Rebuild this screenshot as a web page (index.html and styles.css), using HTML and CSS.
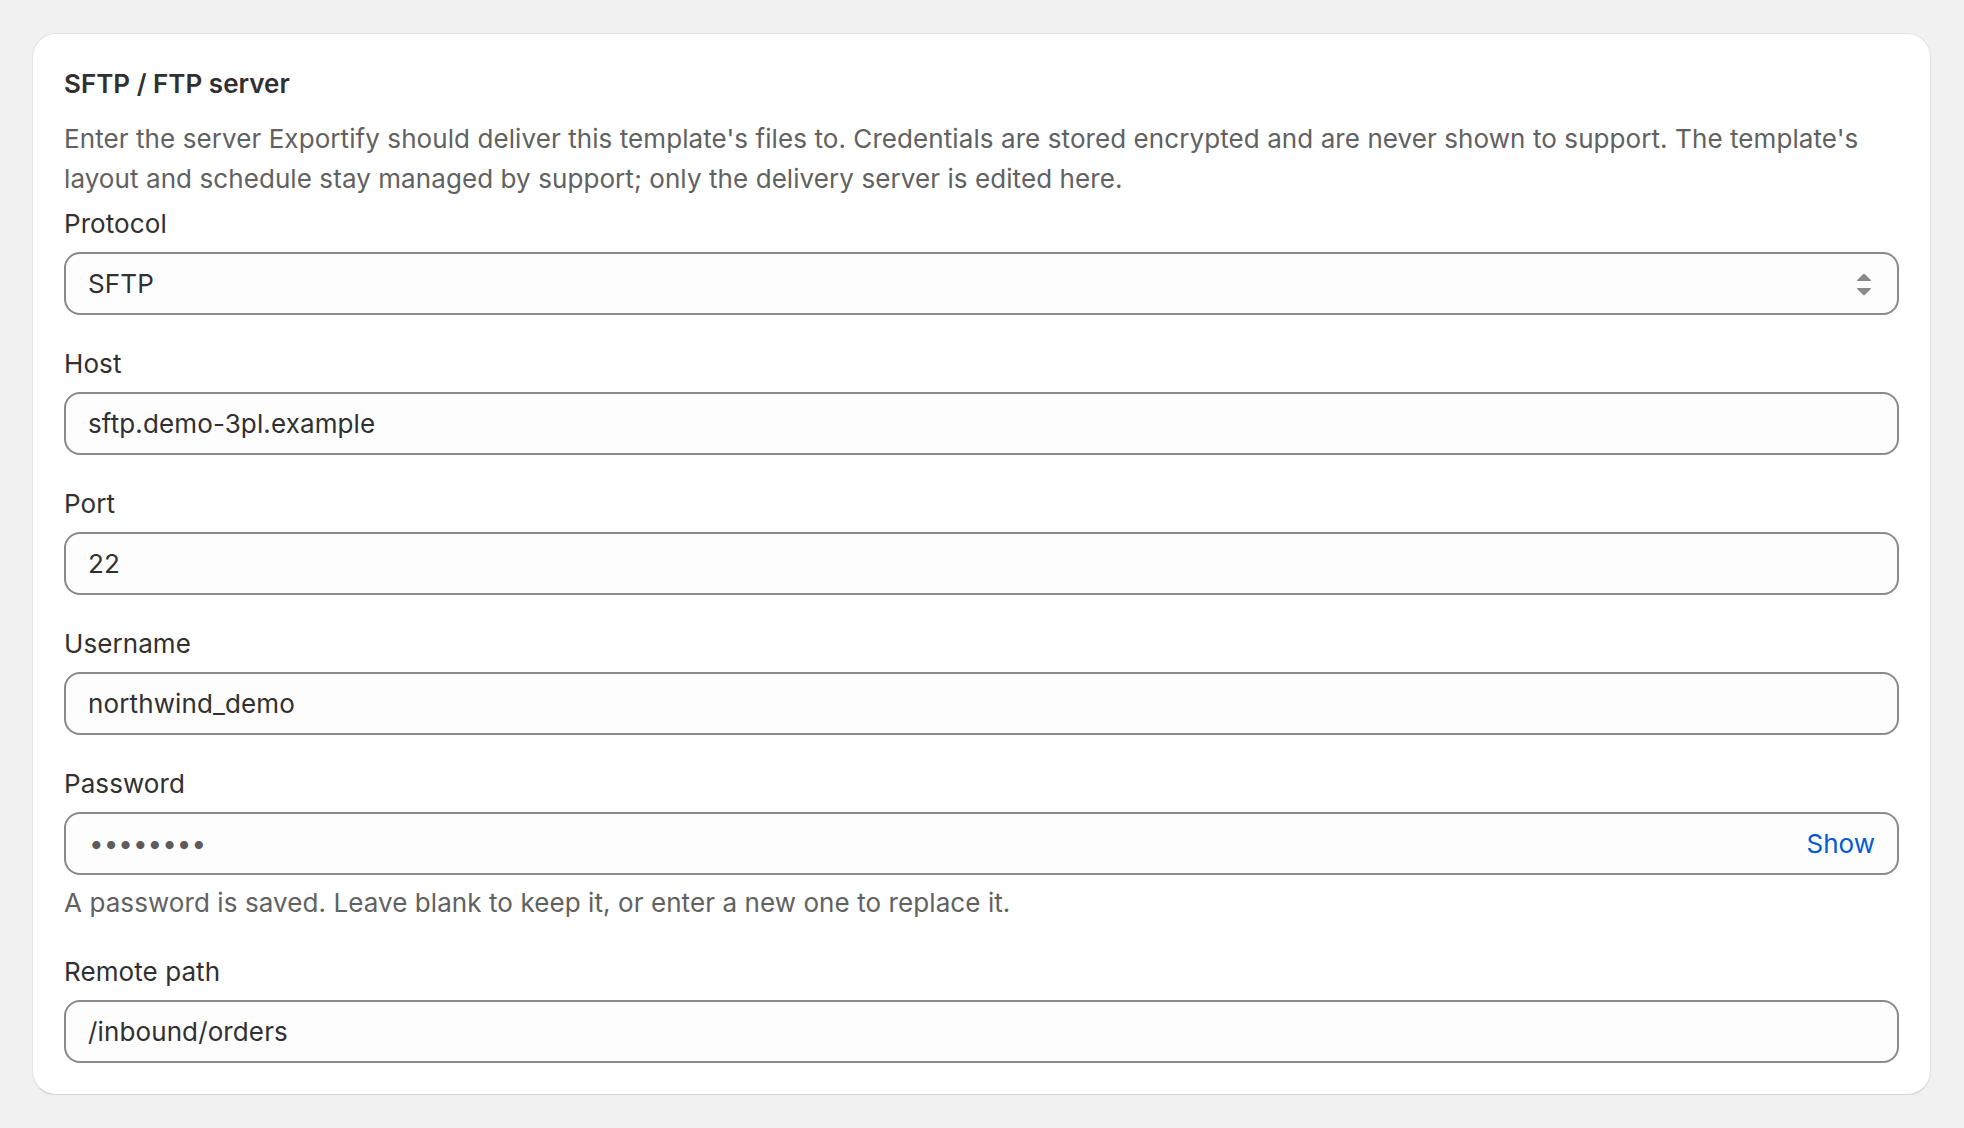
FILE: index.html
```html
<!DOCTYPE html>
<html lang="en">
<head>
<meta charset="utf-8">
<title>SFTP / FTP server</title>
<link rel="stylesheet" href="styles.css">
</head>
<body>
<main class="page">
  <section class="card">
    <h2 class="card-title">SFTP / FTP server</h2>
    <p class="card-desc">Enter the server Exportify should deliver this template's files to. Credentials are stored encrypted and are never shown to support. The template's layout and schedule stay managed by support; only the delivery server is edited here.</p>
    <div class="form">
      <div class="field">
        <label class="label" for="protocol">Protocol</label>
        <div class="box">
          <select id="protocol" class="control">
            <option>SFTP</option>
            <option>FTP</option>
          </select>
          <svg class="select-icon" width="16" height="24" viewBox="0 0 16 24" aria-hidden="true">
            <path d="M1.2 8 L7 2.2 Q8 1.2 9 2.2 L14.8 8 Q15.6 9 14.4 9 L1.6 9 Q0.4 9 1.2 8 Z" fill="#8a8a8a"/>
            <path d="M1.2 17 L7 22.8 Q8 23.8 9 22.8 L14.8 17 Q15.6 16 14.4 16 L1.6 16 Q0.4 16 1.2 17 Z" fill="#8a8a8a"/>
          </svg>
        </div>
      </div>
      <div class="field">
        <label class="label" for="host">Host</label>
        <div class="box"><input id="host" class="control" type="text" value="sftp.demo-3pl.example"></div>
      </div>
      <div class="field">
        <label class="label" for="port">Port</label>
        <div class="box"><input id="port" class="control" type="text" value="22"></div>
      </div>
      <div class="field">
        <label class="label" for="user">Username</label>
        <div class="box"><input id="user" class="control" type="text" value="northwind_demo"></div>
      </div>
      <div class="field">
        <label class="label" for="pass">Password</label>
        <div class="box"><input id="pass" class="control control-pass" type="password" value="demopass"><button class="show-btn" type="button">Show</button></div>
        <p class="help">A password is saved. Leave blank to keep it, or enter a new one to replace it.</p>
      </div>
      <div class="field">
        <label class="label" for="path">Remote path</label>
        <div class="box"><input id="path" class="control" type="text" value="/inbound/orders"></div>
      </div>
    </div>
  </section>
</main>
</body>
</html>
```

FILE: styles.css
```css
* { box-sizing: border-box; }
html, body { margin: 0; padding: 0; }
body {
  background: #f1f1f1;
  font-family: Inter, "Noto Sans", "Liberation Sans", sans-serif;
  color: #303030;
  font-size: 26px;
  line-height: 40px;
}
.page {
  padding: 33px 33px 0 32px;
}
.card {
  background: #ffffff;
  border: 1px solid #e3e3e3;
  border-bottom-color: #d4d4d4;
  border-radius: 24px;
  box-shadow: 0 1px 0 rgba(26, 26, 26, 0.06);
  padding: 31px 31px 31px 31px;
}
.card-title {
  margin: 0;
  font-size: 26px;
  line-height: 38px;
  font-weight: 600;
  color: #303030;
}
.card-desc {
  margin: 16px 0 0 0;
  color: #616161;
  font-size: 26px;
  line-height: 40px;
  letter-spacing: 0.08px;
}
.form {
  display: flex;
  flex-direction: column;
  gap: 29px;
  margin-top: 5px;
}
.field {
  display: flex;
  flex-direction: column;
}
.label {
  display: block;
  font-size: 26px;
  line-height: 40px;
  margin-bottom: 8px;
  color: #303030;
  letter-spacing: 0.08px;
}
.box {
  display: flex;
  align-items: center;
  height: 63px;
  border: 2px solid #8a8a8a;
  border-radius: 16px;
  background: #fdfdfd;
  padding: 0 22px 0 22px;
}
.control {
  flex: 1;
  min-width: 0;
  border: 0;
  outline: none;
  background: transparent;
  font-family: inherit;
  font-size: 26px;
  line-height: 40px;
  color: #303030;
  padding: 0;
  margin: 0;
  letter-spacing: 0.12px;
  -webkit-appearance: none;
  appearance: none;
}
.control-pass {
  color: #5c5c5c;
  padding-left: 1px;
  letter-spacing: 0;
}
.select-icon {
  flex: none;
  margin-right: 3px;
}
.show-btn {
  flex: none;
  border: 0;
  background: transparent;
  padding: 0;
  font-family: inherit;
  font-size: 26px;
  line-height: 40px;
  color: #005bd3;
  cursor: pointer;
}
.help {
  margin: 8px 0 0 0;
  color: #616161;
  font-size: 26px;
  line-height: 40px;
  letter-spacing: 0.08px;
}
```
